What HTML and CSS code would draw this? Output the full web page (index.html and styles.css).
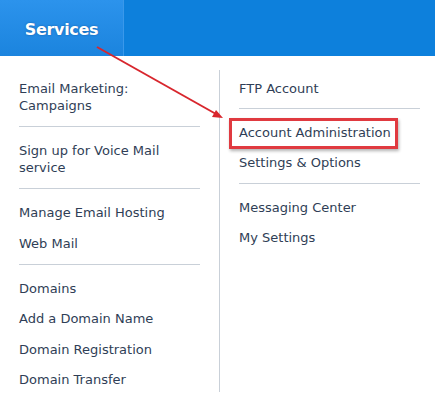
FILE: index.html
```html
<!DOCTYPE html>
<html>
<head>
<meta charset="utf-8">
<link rel="stylesheet" href="styles.css">
</head>
<body>
<div class="page">
  <header class="topbar">
    <div class="tab">Services</div>
  </header>
  <div class="menu">
    <div class="col col-left">
      <div class="group">
        <div class="item">Email Marketing:<br>Campaigns</div>
      </div>
      <div class="group">
        <div class="item">Sign up for Voice Mail<br>service</div>
      </div>
      <div class="group">
        <div class="item">Manage Email Hosting</div>
        <div class="item">Web Mail</div>
      </div>
      <div class="group last">
        <div class="item">Domains</div>
        <div class="item">Add a Domain Name</div>
        <div class="item">Domain Registration</div>
        <div class="item">Domain Transfer</div>
      </div>
    </div>
    <div class="vdivider"></div>
    <div class="col col-right">
      <div class="group tight">
        <div class="item">FTP Account</div>
      </div>
      <div class="group">
        <div class="item highlight">Account Administration</div>
        <div class="item">Settings &amp; Options</div>
      </div>
      <div class="group last">
        <div class="item">Messaging Center</div>
        <div class="item">My Settings</div>
      </div>
    </div>
  </div>
  <svg class="arrow" width="435" height="402" viewBox="0 0 435 402">
    <line x1="97" y1="47" x2="216" y2="114" stroke="#d8262d" stroke-width="2"/>
    <polygon points="223,118 212,117 216,110" fill="#d8262d"/>
  </svg>
</div>
</body>
</html>
```
FILE: styles.css
```css
html, body {
  margin: 0;
  padding: 0;
  background: #ffffff;
}
.page {
  position: relative;
  width: 435px;
  height: 402px;
  overflow: hidden;
  font-family: "DejaVu Sans", Verdana, sans-serif;
}
.topbar {
  height: 56px;
  background: #0d80dc;
  display: flex;
}
.tab {
  width: 124px;
  border-right: 1px solid #3a98ea;
  background: linear-gradient(#2c93ec, #1b84de);
  color: #ffffff;
  font-weight: bold;
  font-size: 16px;
  display: flex;
  align-items: center;
  justify-content: center;
  padding-top: 2px;
  box-sizing: border-box;
  text-shadow: 0 0 2px rgba(0, 40, 100, 0.5);
  letter-spacing: -0.3px;
}
.menu {
  display: flex;
  padding-top: 9px;
}
.col-left {
  width: 181px;
  padding: 0 19px;
}
.col-right {
  flex: 1;
  padding: 0 15px 0 19px;
}
.vdivider {
  width: 1px;
  background: #c9d0d8;
  margin: 5px 0 0;
  height: 322px;
}
.group {
  padding: 15px 0 12px;
  border-bottom: 1px solid #c9d0d8;
  display: flex;
  flex-direction: column;
  gap: 13.5px;
}
.col-right .group {
  gap: 13px;
}
.group.tight {
  padding-bottom: 11px;
}
.group.last {
  border-bottom: none;
}
.item {
  font-size: 13px;
  line-height: 17px;
  color: #2f3e56;
  white-space: nowrap;
}
.highlight {
  position: relative;
}
.highlight::after {
  content: "";
  position: absolute;
  left: -10px;
  top: -6px;
  width: 163px;
  height: 25px;
  border: 3px solid #e03a40;
  box-shadow: 1px 2px 3px rgba(0, 0, 0, 0.3);
}
.arrow {
  position: absolute;
  left: 0;
  top: 0;
  pointer-events: none;
}
```
